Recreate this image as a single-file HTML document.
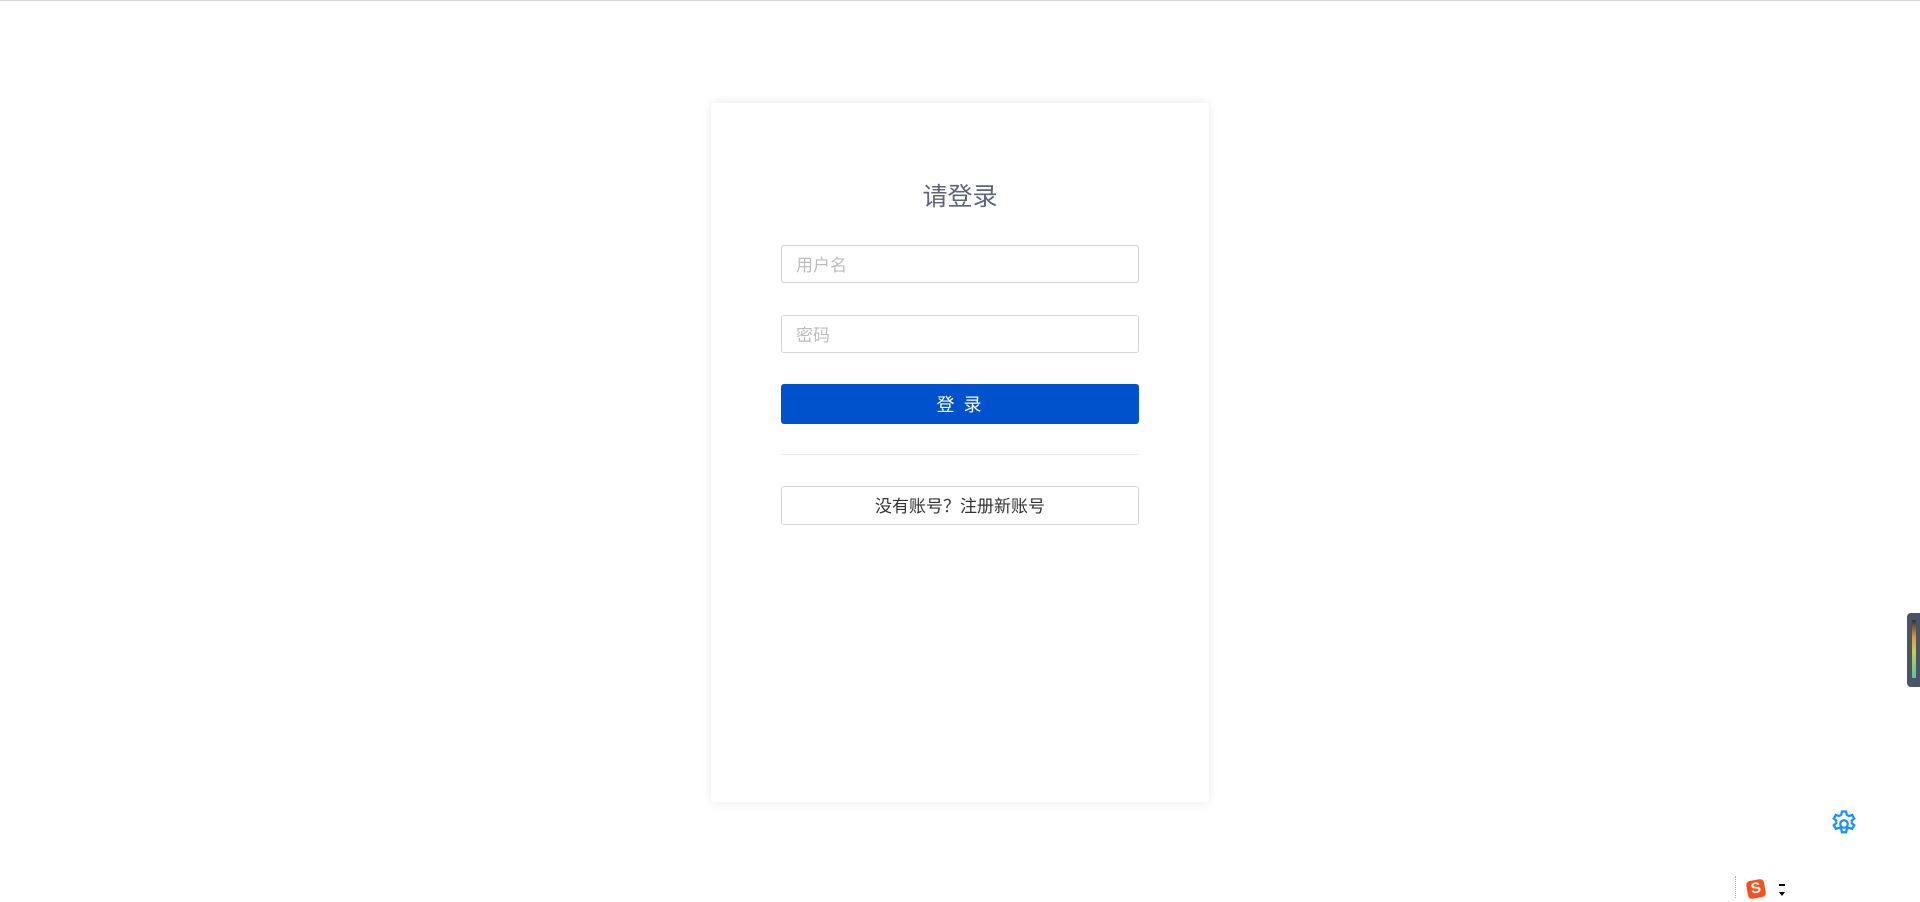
<!DOCTYPE html>
<html><head><meta charset="utf-8"><style>
html,body{margin:0;padding:0;width:1920px;height:902px;overflow:hidden;background:#fff;font-family:"Liberation Sans","Noto Sans CJK SC",sans-serif;position:relative}
.top{position:absolute;left:0;top:0;width:1920px;height:1px;background:#d8d8d8}
.card{position:absolute;left:711px;top:103px;width:498px;height:699px;background:#fff;border-radius:4px;box-shadow:0 0 12px rgba(0,0,0,0.09)}
.title{position:absolute;top:180px;text-align:center;font-size:25px;color:#5b6478;line-height:34px}
.inp{position:absolute;left:781px;height:36px;border:1px solid #d4d4d4;border-radius:3px;font-size:17px;color:#bdbdbd;line-height:39px;padding-left:14px;box-sizing:content-box;width:342px}
.btn{position:absolute;left:781px;top:384px;width:358px;height:40px;background:#0052cc;border-radius:3px;color:#fff;text-align:center;line-height:43px;font-size:18px;letter-spacing:2px}
.hr{position:absolute;left:781px;top:454px;width:358px;height:1px;background:#ebebeb}
.reg{position:absolute;left:781px;top:486px;width:356px;height:37px;border:1px solid #d4d4d4;border-radius:3px;text-align:center;line-height:40px;font-size:17px;color:#333}
</style></head><body>
<div class="top"></div>
<div class="card"></div>
<div class="title" style="left:711px;width:498px">请登录</div>
<div class="inp" style="top:245px">用户名</div>
<div class="inp" style="top:315px">密码</div>
<div class="btn">登 录</div>
<div class="hr"></div>
<div class="reg">没有账号？注册新账号</div>
<svg style="position:absolute;left:1829px;top:809px" width="30" height="30" viewBox="0 0 24 24" fill="none" stroke="#1890ff" stroke-width="1.8"><path d="M10.3 2h3.4l.5 2.6 1.8 1 2.5-.9 1.7 2.9-2 1.7v2l2 1.7-1.7 2.9-2.5-.9-1.8 1-.5 2.6h-3.4l-.5-2.6-1.8-1-2.5.9-1.7-2.9 2-1.7v-2l-2-1.7 1.7-2.9 2.5.9 1.8-1z"/><circle cx="12" cy="12" r="3"/></svg>
<div style="position:absolute;left:1907px;top:613px;width:16px;height:74px;background:#4b5366;border-radius:4px"></div>
<div style="position:absolute;left:1912px;top:620px;width:4px;height:58px;background:linear-gradient(#333,#d9a030 30%,#c8d040 55%,#50c8a0)"></div>
<div style="position:absolute;left:1735px;top:876px;width:1px;height:22px;border-left:1px dotted #aaa"></div>
<div style="position:absolute;left:1747px;top:880px;width:18px;height:18px;background:#f5531e;border-radius:4px;transform:rotate(-10deg);color:#fff;font-weight:bold;font-size:15px;line-height:18px;text-align:center">S</div>
<div style="position:absolute;left:1779px;top:884px;width:6px;height:2px;background:#000"></div>
<div style="position:absolute;left:1779px;top:892px;width:0;height:0;border-left:3px solid transparent;border-right:3px solid transparent;border-top:4px solid #000"></div>
</body></html>
